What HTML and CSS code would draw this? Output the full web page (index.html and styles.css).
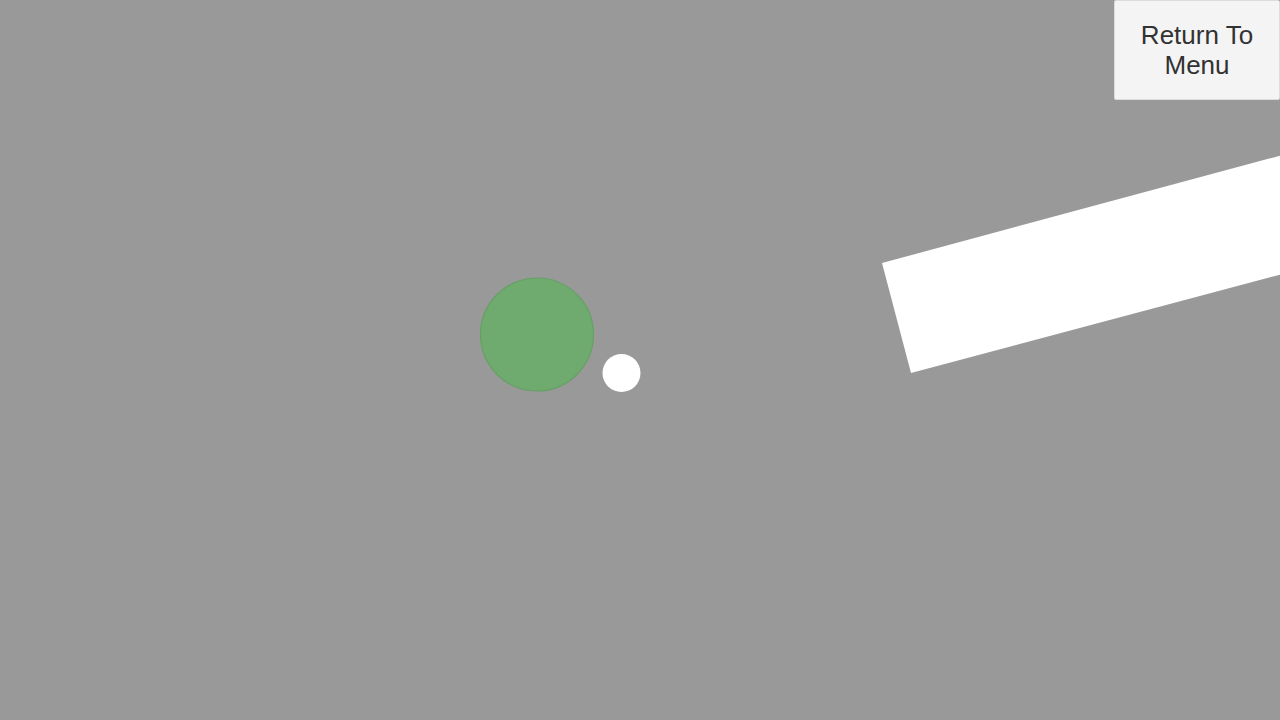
FILE: index.html
```html
<!DOCTYPE html>
<html>
<head>
<meta charset="utf-8">
<link rel="stylesheet" href="styles.css">
</head>
<body>
<div class="stage">
  <svg class="scene" width="1280" height="720" viewBox="0 0 1280 720">
    <polygon points="882,263 1290,153 1290,272 911,373" fill="#ffffff"/>
    <circle cx="537" cy="334.5" r="56.5" fill="#6faa6e" stroke="#66a065" stroke-width="1.2"/>
    <circle cx="621.5" cy="373" r="19" fill="#ffffff"/>
  </svg>
  <button class="menu-btn">Return To<br>Menu</button>
</div>
</body>
</html>
```
FILE: styles.css
```css
html, body {
  margin: 0;
  padding: 0;
  width: 1280px;
  height: 720px;
  overflow: hidden;
  background: #999999;
}
.stage {
  position: relative;
  width: 1280px;
  height: 720px;
}
.scene {
  position: absolute;
  left: 0;
  top: 0;
  display: block;
}
.menu-btn {
  position: absolute;
  left: 1114px;
  top: 0;
  width: 166px;
  height: 100px;
  box-sizing: border-box;
  background: #f4f4f4;
  border: 1px solid #dcdcdc;
  border-radius: 2px;
  color: #323232;
  font-family: "Liberation Sans", Arial, sans-serif;
  font-size: 26px;
  line-height: 30px;
  text-align: center;
  padding: 0;
  margin: 0;
}
```
